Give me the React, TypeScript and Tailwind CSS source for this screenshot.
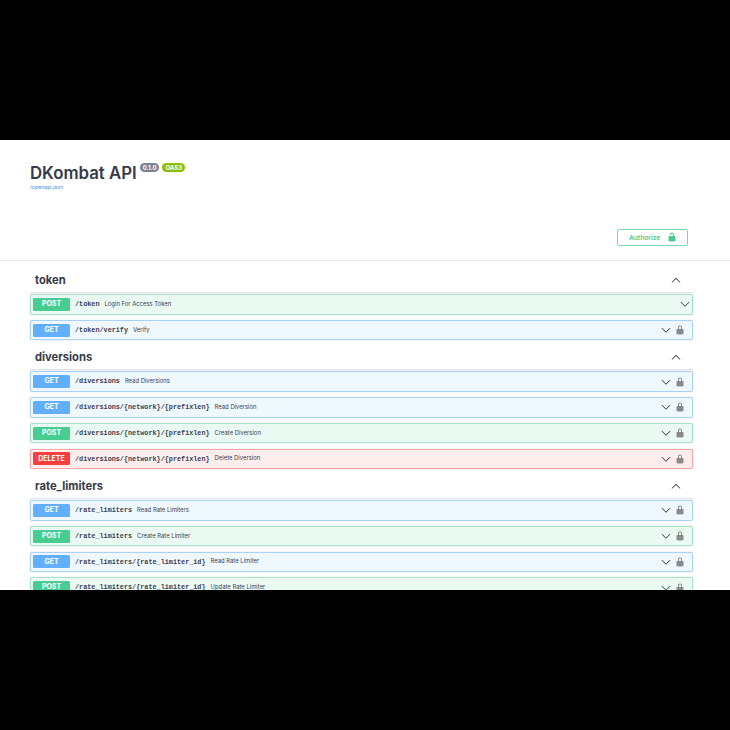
import React from "react"

type Method = "GET" | "POST" | "DELETE"

interface Operation {
	method: Method
	path: string
	summary: string
	locked?: boolean
}

interface Section {
	name: string
	operations: Operation[]
}

const sections: Section[] = [
	{
		name: "token",
		operations: [
			{ method: "POST", path: "/token", summary: "Login For Access Token", locked: false },
			{ method: "GET", path: "/token/verify", summary: "Verify" },
		],
	},
	{
		name: "diversions",
		operations: [
			{ method: "GET", path: "/diversions", summary: "Read Diversions" },
			{ method: "GET", path: "/diversions/{network}/{prefixlen}", summary: "Read Diversion" },
			{ method: "POST", path: "/diversions/{network}/{prefixlen}", summary: "Create Diversion" },
			{ method: "DELETE", path: "/diversions/{network}/{prefixlen}", summary: "Delete Diversion" },
		],
	},
	{
		name: "rate_limiters",
		operations: [
			{ method: "GET", path: "/rate_limiters", summary: "Read Rate Limiters" },
			{ method: "POST", path: "/rate_limiters", summary: "Create Rate Limiter" },
			{ method: "GET", path: "/rate_limiters/{rate_limiter_id}", summary: "Read Rate Limiter" },
			{ method: "POST", path: "/rate_limiters/{rate_limiter_id}", summary: "Update Rate Limiter" },
		],
	},
]

const rowStyles: Record<Method, string> = {
	GET: "bg-[#eff7ff] border-[#a9d2fb]",
	POST: "bg-[#ebf9f3] border-[#a5e3c8]",
	DELETE: "bg-[#feeded] border-[#fba6a6]",
}

const badgeStyles: Record<Method, string> = {
	GET: "bg-[#61affe]",
	POST: "bg-[#49cc90]",
	DELETE: "bg-[#f93e3e]",
}

const LockClosed = ({ className }: { className: string }) => (
	<svg viewBox="0 0 20 20" className={className} fill="currentColor">
		<path d="M15.8 8H14V5.6C14 2.703 12.665 1 10 1 7.334 1 6 2.703 6 5.6V8H4c-.553 0-1 .646-1 1.199V17c0 .549.428 1.139.951 1.307l1.197.387C5.672 18.861 6.55 19 7.1 19h5.8c.549 0 1.428-.139 1.951-.307l1.196-.387c.524-.167.953-.757.953-1.306V9.199C17 8.646 16.352 8 15.8 8zM12 8H8V5.199C8 3.754 8.797 3 10 3c1.203 0 2 .754 2 2.199V8z" />
	</svg>
)

const LockOpen = ({ className }: { className: string }) => (
	<svg viewBox="0 0 20 20" className={className} fill="currentColor">
		<path d="M15.8 8H14V5.6C14 2.703 12.665 1 10 1 7.334 1 6 2.703 6 5.6V6h2v-.801C8 3.754 8.797 3 10 3c1.203 0 2 .754 2 2.199V8H4c-.553 0-1 .646-1 1.199V17c0 .549.428 1.139.951 1.307l1.197.387C5.672 18.861 6.55 19 7.1 19h5.8c.549 0 1.428-.139 1.951-.307l1.196-.387c.524-.167.953-.757.953-1.306V9.199C17 8.646 16.352 8 15.8 8z" />
	</svg>
)

const Chevron = ({ up }: { up?: boolean }) => (
	<svg viewBox="0 0 20 20" className="size-[10px] shrink-0 text-[#303030]" fill="currentColor">
		{up ? (
			<path d="M 17.418 14.908 C 17.69 15.176 18.127 15.176 18.397 14.908 C 18.667 14.64 18.668 14.207 18.397 13.939 L 10.489 6.109 C 10.219 5.841 9.782 5.841 9.51 6.109 L 1.602 13.939 C 1.332 14.207 1.332 14.64 1.602 14.908 C 1.873 15.176 2.311 15.176 2.581 14.908 L 10 7.767 L 17.418 14.908 Z" />
		) : (
			<path d="M 17.418 6.109 C 17.69 5.841 18.127 5.841 18.397 6.109 C 18.667 6.377 18.668 6.81 18.397 7.078 L 10.489 14.908 C 10.219 15.176 9.782 15.176 9.51 14.908 L 1.602 7.078 C 1.332 6.81 1.332 6.377 1.602 6.109 C 1.873 5.841 2.311 5.841 2.581 6.109 L 10 13.25 L 17.418 6.109 Z" />
		)}
	</svg>
)

const OperationRow = ({ operation }: { operation: Operation }) => (
	<div
		className={`flex h-[20.5px] shrink-0 items-center rounded-[2px] border pr-[2px] pl-[2px] shadow-[0_0_1.5px_rgba(0,0,0,0.19)] ${rowStyles[operation.method]}`}>
		<span
			className={`flex h-[13px] w-[37px] shrink-0 items-center justify-center rounded-[1.5px] text-[7px] font-bold text-white ${badgeStyles[operation.method]}`}>
			{operation.method}
		</span>
		<span className="ml-[5px] font-['Liberation_Mono',monospace] text-[6.8px] font-bold whitespace-nowrap text-[#3b4151]">
			{operation.path}
		</span>
		<span className="ml-[5px] grow text-[5.9px] whitespace-nowrap text-[#3b4151]">{operation.summary}</span>
		<Chevron />
		{operation.locked !== false && <LockClosed className="mr-[5.5px] ml-[4px] size-[10px] shrink-0 text-[#8a8a8a]" />}
	</div>
)

const App = () => {
	return (
		<div className="flex h-[730px] w-[730px] flex-col overflow-hidden bg-black font-['Inter',sans-serif]">
			<div className="mt-[140px] h-[450px] overflow-hidden bg-white">
				<div className="flex h-[120.5px] flex-col border-b border-[#e8e8e8] px-[30px] pt-[23px]">
					<div className="flex items-start">
						<h1 className="text-[16.8px] leading-[20px] font-semibold text-[#343a4a]">DKombat API</h1>
						<span className="ml-[3px] flex h-[9px] items-center rounded-[5px] bg-[#7d8492] px-[3px] text-[6px] font-bold text-white">
							0.1.0
						</span>
						<span className="ml-[3px] flex h-[9px] items-center rounded-[5px] bg-[#89bf04] px-[3px] text-[6px] font-bold text-white">
							OAS3
						</span>
					</div>
					<span className="mt-[1px] text-[5.2px] text-[#4990e2]">/openapi.json</span>
					<div className="mt-[37px] flex justify-end pr-[12px]">
						<button className="flex h-[17px] w-[71px] items-center justify-between rounded-[2px] border-[1.5px] border-[#74dbac] pr-[10px] pl-[11px] text-[6.6px] font-semibold text-[#49cc90]">
							<span className="mt-[2px] leading-[10px]">Authorize</span>
							<LockOpen className="size-[10px] text-[#49cc90]" />
						</button>
					</div>
				</div>
				<div className="flex flex-col pt-[2.5px] pr-[37px] pl-[30px]">
					{sections.map((section) => (
						<div key={section.name} className="flex flex-col pt-[3.5px]">
							<div className="mb-[1.5px] flex h-[26px] items-center justify-between border-b border-[#e4e4e6] pt-[2px] pr-[12px] pl-[5px]">
								<h2 className="text-[11.2px] font-bold text-[#343a4a]">{section.name}</h2>
								<Chevron up />
							</div>
							<div className="flex flex-col gap-[5.25px]">
								{section.operations.map((operation) => (
									<OperationRow key={operation.method + operation.path} operation={operation} />
								))}
							</div>
						</div>
					))}
				</div>
			</div>
		</div>
	)
}

export default App
